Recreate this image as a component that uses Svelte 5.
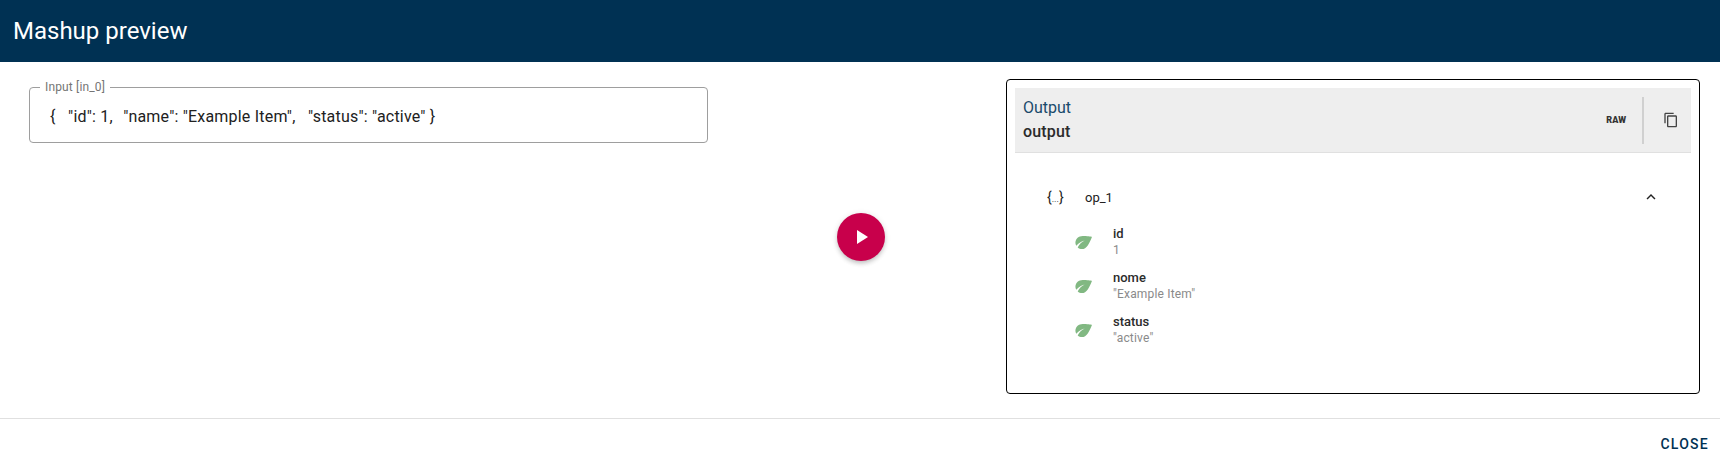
<script>
  const fields = [
    { name: 'id', value: '1' },
    { name: 'nome', value: '"Example Item"' },
    { name: 'status', value: '"active"' }
  ];
</script>

<div class="dialog">
  <header class="title"><h1>Mashup preview</h1></header>
  <main class="content">
    <section class="inputs">
      <fieldset class="field">
        <legend>Input [in_0]</legend>
        <div class="value">{'{'}&nbsp;&nbsp; "id": 1,&nbsp; <span class="gap">"name": "Example Item",</span> &nbsp; "status": "active" {'}'}</div>
      </fieldset>
    </section>
    <div class="action">
      <button class="run" aria-label="Run">
        <svg viewBox="0 0 24 24" width="24" height="24"><path d="M8 5v14l11-7z" fill="#fff"/></svg>
      </button>
    </div>
    <section class="output">
      <div class="out-head">
        <div class="out-titles">
          <div class="out-label">Output</div>
          <div class="out-name">output</div>
        </div>
        <span class="raw">RAW</span>
        <span class="sep"></span>
        <button class="copy" aria-label="Copy">
          <svg viewBox="0 0 24 24" width="16" height="16"><path fill="#444" d="M16 1H4c-1.100 0-2 .9-2 2v14h2V3h12V1zm3 4H8c-1.100 0-2 .9-2 2v14c0 1.100.9 2 2 2h11c1.100 0 2-.9 2-2V7c0-1.100-.9-2-2-2zm0 16H8V7h11v14z"/></svg>
        </button>
      </div>
      <div class="tree">
        <div class="node">
          <span class="braces">{'{'}<small>...</small>{'}'}</span>
          <span class="node-name">op_1</span>
          <svg class="chev" viewBox="0 0 24 24" width="18" height="18"><path fill="#222" d="M7.410 15.410 12 10.830l4.590 4.580L18 14l-6-6-6 6z"/></svg>
        </div>
        {#each fields as f}
          <div class="leaf">
            <svg class="leaf-icon" viewBox="0 0 24 24" width="22" height="22"><path transform="rotate(15 12 12)" fill="#81b882" d="M6.050 8.050c-2.730 2.730-2.730 7.150-.02 9.880 1.470-3.400 4.090-6.240 7.360-7.930-2.770 2.340-4.710 5.610-5.390 9.320 2.600 1.230 5.800.78 7.950-1.370C19.430 14.470 20 4 20 4S9.530 4.570 6.050 8.050z"/></svg>
            <div class="leaf-text">
              <div class="leaf-name">{f.name}</div>
              <div class="leaf-value">{f.value}</div>
            </div>
          </div>
        {/each}
      </div>
    </section>
  </main>
  <footer class="actions"><button class="close">CLOSE</button></footer>
</div>

<style>
  :global(body) { margin: 0; background: #fff; }
  .dialog {
    width: 1720px; height: 467px; display: flex; flex-direction: column;
    font-family: Roboto, "Liberation Sans", sans-serif; overflow: hidden;
  }
  .title { height: 62px; background: #003153; display: flex; align-items: center; padding: 0 13px; flex: none; }
  h1 { margin: 0; font-size: 24px; font-weight: 400; color: #fff; line-height: 36px; }
  .content { height: 357px; flex: none; display: flex; box-sizing: border-box; padding: 17px 20px 24px 29px; border-bottom: 1px solid #e0e0e0; }
  .inputs { width: 679px; flex: none; padding-top: 1px; }
  .field { margin: 0; padding: 0 20px; height: 63px; box-sizing: border-box; border: 1px solid #9e9e9e; border-radius: 4px; min-width: 0; }
  legend { font-size: 12px; color: #757575; padding: 0 5px; margin-left: -10px; line-height: 14px; letter-spacing: .15px; }
  .value { font-size: 16px; line-height: 24px; color: #212121; margin-top: 11px; white-space: nowrap; letter-spacing: .2px; }
  .gap { margin-left: 2px; }
  .action { flex: 1; display: flex; align-items: center; justify-content: center; }
  .run {
    width: 48px; height: 48px; border-radius: 50%; border: 0; padding: 0; background: #c8004b;
    display: flex; align-items: center; justify-content: center;
    box-shadow: 0 3px 5px -1px rgba(0,0,0,.2), 0 1px 6px rgba(0,0,0,.12);
    margin-left: 8px;
  }
  .output { width: 694px; flex: none; box-sizing: border-box; border: 1px solid #000; border-radius: 4px; padding: 8px; }
  .out-head { height: 65px; background: #eeeeee; border-bottom: 1px solid #e0e0e0; box-sizing: border-box; display: flex; align-items: center; padding: 0 12px 0 8px; }
  .out-titles { flex: 1; }
  .out-label { font-size: 16px; line-height: 24px; color: #1a4a6b; }
  .out-name { font-size: 16px; font-weight: 500; line-height: 24px; color: #2b2b2b; letter-spacing: .15px; }
  .raw { font-size: 9px; font-weight: 900; color: #333; margin-right: 16px; }
  .sep { width: 2px; height: 47px; background: #d0d0d0; margin-right: 19px; }
  .copy { width: 16px; height: 16px; padding: 0; border: 0; background: none; display: flex; }
  .tree { padding: 32px 31px 0 32px; }
  .node { display: flex; align-items: center; height: 24px; margin-bottom: 10px; font-size: 13px; color: #212121; }
  .braces { width: 38px; font-size: 14px; }
  .braces small { font-size: 9px; }
  .node-name { flex: 1; }
  .leaf { display: flex; align-items: center; height: 44px; padding-left: 25px; }
  .leaf-icon { margin-right: 19px; margin-top: 2px; }
  .leaf-name { font-size: 13px; line-height: 17px; color: #2b2b2b; font-weight: 500; }
  .leaf-value { font-size: 12px; line-height: 16px; color: #8a8a8a; letter-spacing: .17px; }
  .actions { flex: 1; display: flex; align-items: center; justify-content: flex-end; padding: 2px 11px 0 0; }
  .close { border: 0; background: none; padding: 0; font-family: inherit; font-size: 14px; font-weight: 500; letter-spacing: 1.25px; color: #003153; }
</style>
